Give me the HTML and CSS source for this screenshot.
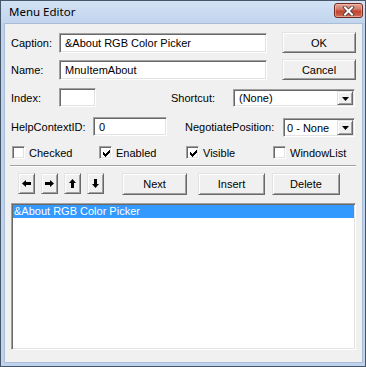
FILE: index.html
```html
<!DOCTYPE html>
<html>
<head>
<meta charset="utf-8">
<title>Menu Editor</title>
<link rel="stylesheet" href="styles.css">
</head>
<body>
<div class="window">
  <div class="titlebar">
    <span class="title">Menu Editor</span>
    <span class="close">
      <svg width="13" height="10" viewBox="0 0 13 10"><path d="M3,1.5 L10,8.5 M10,1.5 L3,8.5" stroke="#3a3a3a" stroke-width="3.6" stroke-linecap="square" fill="none"/><path d="M3,1.5 L10,8.5 M10,1.5 L3,8.5" stroke="#ffffff" stroke-width="2" stroke-linecap="square" fill="none"/></svg>
    </span>
  </div>
  <div class="client">
    <div class="row r1">
      <span class="lbl w-cap">Caption:</span>
      <div class="field f-text f-wide">&amp;About RGB Color Picker</div>
      <div class="btn b-side">OK</div>
    </div>
    <div class="row r2">
      <span class="lbl w-cap">Name:</span>
      <div class="field f-text f-wide">MnuItemAbout</div>
      <div class="btn b-side">Cancel</div>
    </div>
    <div class="row r3">
      <span class="lbl w-cap">Index:</span>
      <div class="field f-index"></div>
      <span class="lbl w-short">Shortcut:</span>
      <div class="field combo c-short">
        <span class="combo-text">(None)</span>
        <span class="combo-btn"><svg width="7" height="4" viewBox="0 0 7 4"><path d="M0,0 H7 L3.5,4 Z" fill="#000"/></svg></span>
      </div>
    </div>
    <div class="row r4">
      <span class="lbl w-help">HelpContextID:</span>
      <div class="field f-text f-help">0</div>
      <span class="lbl w-neg">NegotiatePosition:</span>
      <div class="field combo c-neg">
        <span class="combo-text">0 - None</span>
        <span class="combo-btn"><svg width="7" height="4" viewBox="0 0 7 4"><path d="M0,0 H7 L3.5,4 Z" fill="#000"/></svg></span>
      </div>
    </div>
    <div class="row r5">
      <div class="chk-item"><span class="chk"></span><span class="chk-lbl">Checked</span></div>
      <div class="chk-item"><span class="chk"><svg width="7" height="7" viewBox="0 0 7 7" shape-rendering="crispEdges"><path d="M6,0 H7 V3 H6 V4 H5 V5 H4 V6 H3 V7 H2 V6 H1 V5 H0 V2 H1 V3 H2 V4 H3 V3 H4 V2 H5 V1 H6 Z" fill="#000"/></svg></span><span class="chk-lbl">Enabled</span></div>
      <div class="chk-item"><span class="chk"><svg width="7" height="7" viewBox="0 0 7 7" shape-rendering="crispEdges"><path d="M6,0 H7 V3 H6 V4 H5 V5 H4 V6 H3 V7 H2 V6 H1 V5 H0 V2 H1 V3 H2 V4 H3 V3 H4 V2 H5 V1 H6 Z" fill="#000"/></svg></span><span class="chk-lbl">Visible</span></div>
      <div class="chk-item"><span class="chk"></span><span class="chk-lbl">WindowList</span></div>
    </div>
    <div class="sep"></div>
    <div class="row r6">
      <div class="arrows">
        <div class="btn b-arrow"><svg width="9" height="7" viewBox="0 0 9 7"><path d="M0,3.5 L4,0 V2 H9 V5 H4 V7 Z" fill="#000"/></svg></div>
        <div class="btn b-arrow"><svg width="9" height="7" viewBox="0 0 9 7"><path d="M9,3.5 L5,0 V2 H0 V5 H5 V7 Z" fill="#000"/></svg></div>
        <div class="btn b-arrow"><svg width="7" height="9" viewBox="0 0 7 9"><path d="M3.5,0 L7,4 H5 V9 H2 V4 H0 Z" fill="#000"/></svg></div>
        <div class="btn b-arrow"><svg width="7" height="9" viewBox="0 0 7 9"><path d="M3.5,9 L7,5 H5 V0 H2 V5 H0 Z" fill="#000"/></svg></div>
      </div>
      <div class="btn b-next">Next</div>
      <div class="btn b-insert">Insert</div>
      <div class="btn b-delete">Delete</div>
    </div>
    <div class="field list">
      <div class="list-item sel">&amp;About RGB Color Picker</div>
    </div>
  </div>
</div>
</body>
</html>
```

FILE: styles.css
```css
* { box-sizing: border-box; }

html, body {
  margin: 0;
  padding: 0;
  background: #bcd1ec;
}

body {
  font-family: "Liberation Sans", Arial, sans-serif;
  font-size: 11px;
  color: #000;
}

.window {
  width: 366px;
  height: 367px;
  border: 1px solid #48566a;
  background: #bfd3ed;
  display: flex;
  flex-direction: column;
}

.titlebar {
  height: 22px;
  flex: none;
  display: flex;
  align-items: center;
  justify-content: space-between;
  padding: 0 2px 0 8px;
  background: linear-gradient(#d3e2f5, #c1d5ee);
}

.title {
  font-family: "Noto Sans", "Open Sans", sans-serif;
  font-size: 11.5px;
  color: #000;
  margin-top: -1px;
}

.close {
  width: 29px;
  height: 15px;
  margin-top: -3px;
  border: 1px solid #6e2b23;
  border-radius: 3px;
  background: linear-gradient(#e5a596 0%, #d57a66 40%, #bf4631 55%, #c95a43 85%, #d97f68 100%);
  display: flex;
  align-items: center;
  justify-content: center;
  box-shadow: inset 0 0 0 1px rgba(255, 210, 200, 0.45);
}

.client {
  flex: 1;
  margin: 0 2px 3px 3px;
  background: #f0f0f0;
  border: 1px solid #a9bdd6;
  padding: 8px 0 0 6px;
  display: flex;
  flex-direction: column;
}

.row {
  display: flex;
  align-items: center;
  flex: none;
}

.r1 { height: 21px; }
.r2 { height: 21px; margin-top: 6px; }
.r3 { height: 19px; margin-top: 8px; }
.r4 { height: 20px; margin-top: 10px; }
.r5 { height: 13px; margin-top: 9px; }
.r6 { height: 22px; margin-top: 6px; align-items: flex-start; }

.lbl {
  flex: none;
  white-space: nowrap;
}

.w-cap { width: 48px; }
.w-short { width: 62px; margin-left: 75px; }
.w-help { width: 82px; }
.w-neg { width: 98px; margin-left: 18px; }

/* sunken 3D field */
.field {
  flex: none;
  background: #fff;
  border: 1px solid;
  border-color: #a0a0a0 #ffffff #ffffff #a0a0a0;
  box-shadow: inset 1px 1px 0 #696969, inset -1px -1px 0 #e3e3e3;
}

.f-text {
  display: flex;
  align-items: center;
  padding: 0 5px;
  white-space: nowrap;
}

.f-wide {
  width: 208px;
  height: 20px;
  align-self: flex-end;
}

.f-index {
  width: 37px;
  height: 19px;
}

.f-help {
  width: 74px;
  height: 19px;
  align-self: flex-start;
}

.combo {
  display: flex;
  align-items: stretch;
  padding: 1px;
  height: 19px;
}

.c-short {
  width: 122px;
  height: 18px;
  align-self: flex-end;
}

.c-neg {
  width: 72px;
  align-self: flex-end;
}

.combo-text {
  flex: 1;
  display: flex;
  align-items: center;
  padding-left: 4px;
  white-space: nowrap;
}

.c-neg .combo-text { padding-left: 2px; }

.combo-btn {
  width: 16px;
  flex: none;
  display: flex;
  align-items: center;
  justify-content: center;
  background: #f0f0f0;
  border: 1px solid;
  border-color: #e3e3e3 #696969 #696969 #e3e3e3;
  box-shadow: inset 1px 1px 0 #fff, inset -1px -1px 0 #a0a0a0;
}

.combo-btn svg { margin-top: 1px; }

/* raised 3D button */
.btn {
  flex: none;
  display: flex;
  align-items: center;
  justify-content: center;
  background: #f0f0f0;
  border: 1px solid;
  border-color: #e3e3e3 #696969 #696969 #e3e3e3;
  box-shadow: inset 1px 1px 0 #fff, inset -1px -1px 0 #a0a0a0;
  white-space: nowrap;
}

.b-side {
  width: 74px;
  height: 21px;
  margin-left: 15px;
}

.chk-item {
  width: 87px;
  flex: none;
  display: flex;
  align-items: center;
}

.chk-item:first-child { margin-left: 1px; }

.chk {
  width: 13px;
  height: 13px;
  flex: none;
  background: #fff;
  border: 1px solid;
  border-color: #a0a0a0 #ffffff #ffffff #a0a0a0;
  box-shadow: inset 1px 1px 0 #696969, inset -1px -1px 0 #e3e3e3;
  display: flex;
  align-items: center;
  justify-content: center;
}

.chk svg { margin: 1px 0 0 1px; }

.chk-lbl {
  margin-left: 4px;
  white-space: nowrap;
}

.sep {
  flex: none;
  margin-top: 6px;
  margin-left: -1px;
  width: 346px;
  height: 2px;
  border-top: 1px solid #a0a0a0;
  border-bottom: 1px solid #ffffff;
}

.arrows {
  display: flex;
  gap: 6px;
  margin-left: 7px;
}

.b-arrow {
  width: 17px;
  height: 21px;
}

.b-next { width: 65px; height: 22px; margin-left: 18px; }
.b-insert { width: 67px; height: 22px; margin-left: 11px; }
.b-delete { width: 68px; height: 22px; margin-left: 7px; }

.list {
  margin-top: 8px;
  width: 345px;
  height: 147px;
  padding: 1px;
}

.list-item {
  height: 13px;
  line-height: 13px;
  padding-left: 1px;
  white-space: nowrap;
}

.list-item.sel {
  background: #3399ff;
  color: #fff;
}
```
